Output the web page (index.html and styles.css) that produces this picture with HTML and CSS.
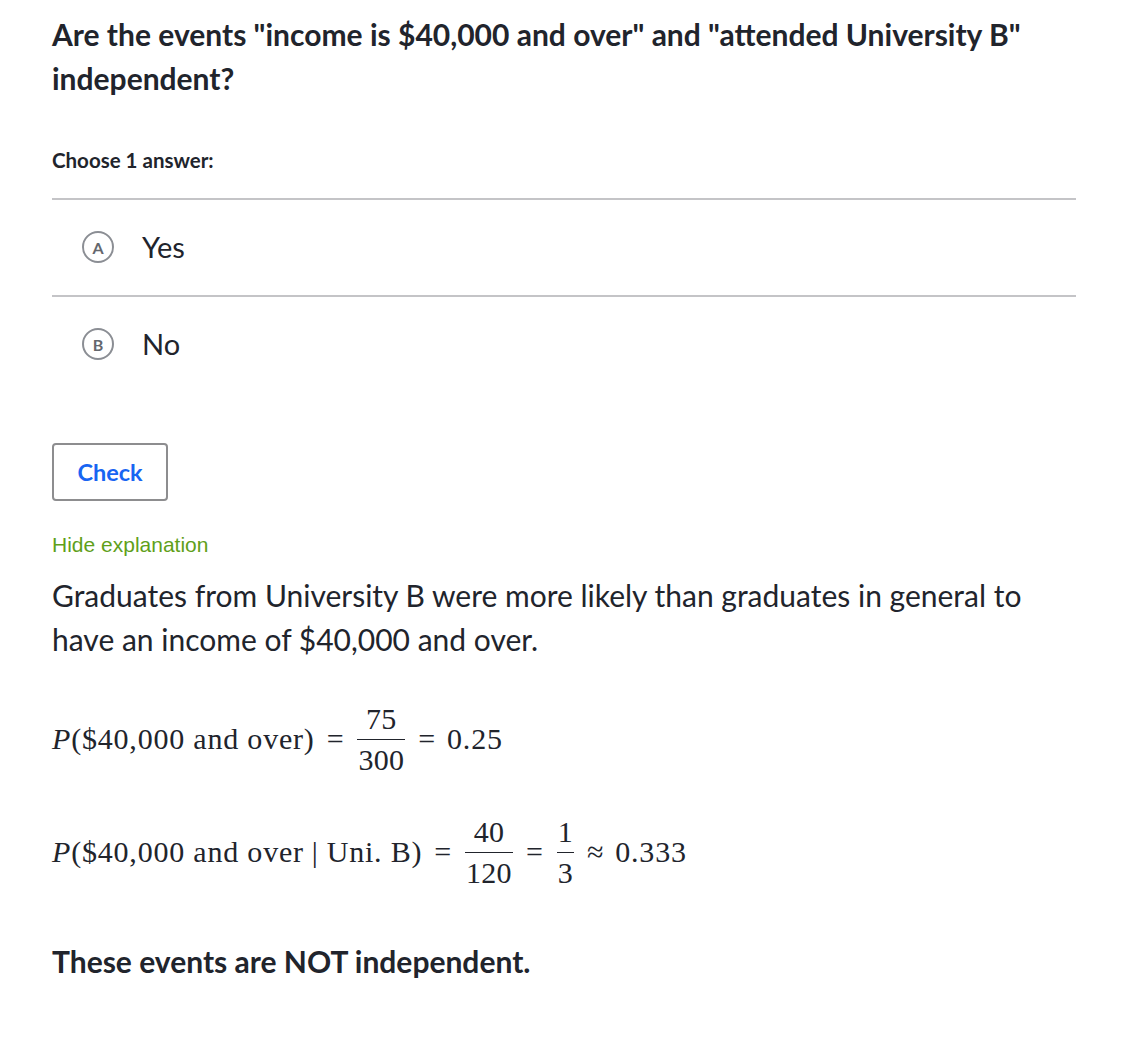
FILE: index.html
```html
<!DOCTYPE html>
<html lang="en">
<head>
<meta charset="utf-8">
<title>Independent events</title>
<link rel="stylesheet" href="styles.css">
</head>
<body>
<main class="page">
  <h1 class="question">Are the events "income is $40,000 and over" and "attended University B" independent?</h1>
  <div class="choose">Choose 1 answer:</div>
  <ul class="choices">
    <li class="choice"><span class="letter">A</span><span class="choice-text">Yes</span></li>
    <li class="choice"><span class="letter">B</span><span class="choice-text">No</span></li>
  </ul>
  <button class="check" type="button">Check</button>
  <div class="hide-wrap"><a class="hide" href="#">Hide explanation</a></div>
  <p class="explain">Graduates from University B were more likely than graduates in general to have an income of $40,000 and over.</p>
  <div class="math-row">
    <span class="mi">P</span><span class="mo">(</span><span>$40,000 and over</span><span class="mo">)</span>
    <span class="rel">=</span>
    <span class="frac"><span class="num">75</span><span class="den">300</span></span>
    <span class="rel">=</span>
    <span>0.25</span>
  </div>
  <div class="math-row">
    <span class="mi">P</span><span class="mo">(</span><span>$40,000 and over</span><span class="bar">|</span><span>Uni. B</span><span class="mo">)</span>
    <span class="rel">=</span>
    <span class="frac"><span class="num">40</span><span class="den">120</span></span>
    <span class="rel">=</span>
    <span class="frac"><span class="num">1</span><span class="den">3</span></span>
    <span class="rel">≈</span>
    <span>0.333</span>
  </div>
  <p class="conclusion">These events are NOT independent.</p>
</main>
</body>
</html>
```
FILE: styles.css
```css
html, body {
  margin: 0;
  padding: 0;
  background: #ffffff;
}

.page {
  padding: 12px 52px 40px 52px;
  font-family: Lato, "Open Sans", sans-serif;
  color: #21242c;
}

.question {
  margin: 0;
  font-size: 30px;
  line-height: 44px;
  font-weight: 700;
}

.choose {
  margin-top: 48px;
  font-size: 20.5px;
  line-height: 24px;
  font-weight: 700;
}

.choices {
  list-style: none;
  margin: 26px 0 0 0;
  padding: 0;
}

.choice {
  display: flex;
  align-items: center;
  border-top: 2px solid #c4c4c7;
  padding: 31px 0 32px 30px;
}

.letter {
  box-sizing: border-box;
  width: 32px;
  height: 32px;
  border: 2px solid #8b8e94;
  border-radius: 50%;
  display: flex;
  align-items: center;
  justify-content: center;
  font-size: 16px;
  font-weight: 700;
  color: #64676d;
}

.choice-text {
  margin-left: 28px;
  font-size: 29px;
  line-height: 32px;
}

.check {
  display: block;
  margin-top: 51px;
  width: 116px;
  height: 58px;
  box-sizing: border-box;
  border: 2px solid #8d8d8f;
  border-radius: 4px;
  background: #ffffff;
  color: #1865f2;
  font-family: Lato, sans-serif;
  font-weight: 700;
  font-size: 23.5px;
  padding: 0;
}

.hide-wrap {
  margin-top: 32px;
  line-height: 24px;
}

.hide {
  font-family: "Liberation Sans", Arial, sans-serif;
  font-size: 21px;
  color: #5fa01a;
  text-decoration: none;
}

.explain {
  margin: 15px 0 0 0;
  font-size: 30px;
  line-height: 44px;
}

.math-row {
  margin-top: 38px;
  height: 80px;
  display: flex;
  align-items: center;
  font-family: "Liberation Serif", "DejaVu Serif", serif;
  font-size: 30px;
  letter-spacing: 0.8px;
  white-space: pre;
}

.math-row + .math-row {
  margin-top: 33px;
}

.mi {
  font-style: italic;
}

.rel {
  margin: 0 11px;
}

.mo + .rel {
  margin-left: 12px;
}

.bar {
  margin: 0 8px;
}

.frac {
  display: inline-flex;
  flex-direction: column;
  align-items: stretch;
  text-align: center;
  padding: 0 2px;
  letter-spacing: 0.3px;
}

.num {
  line-height: 30px;
  padding: 0 1px 5px;
  border-bottom: 1.5px solid #21242c;
}

.den {
  line-height: 30px;
  padding: 5px 1px 0;
}

.conclusion {
  margin: 47px 0 0 0;
  font-size: 30px;
  line-height: 44px;
  font-weight: 700;
}
```
